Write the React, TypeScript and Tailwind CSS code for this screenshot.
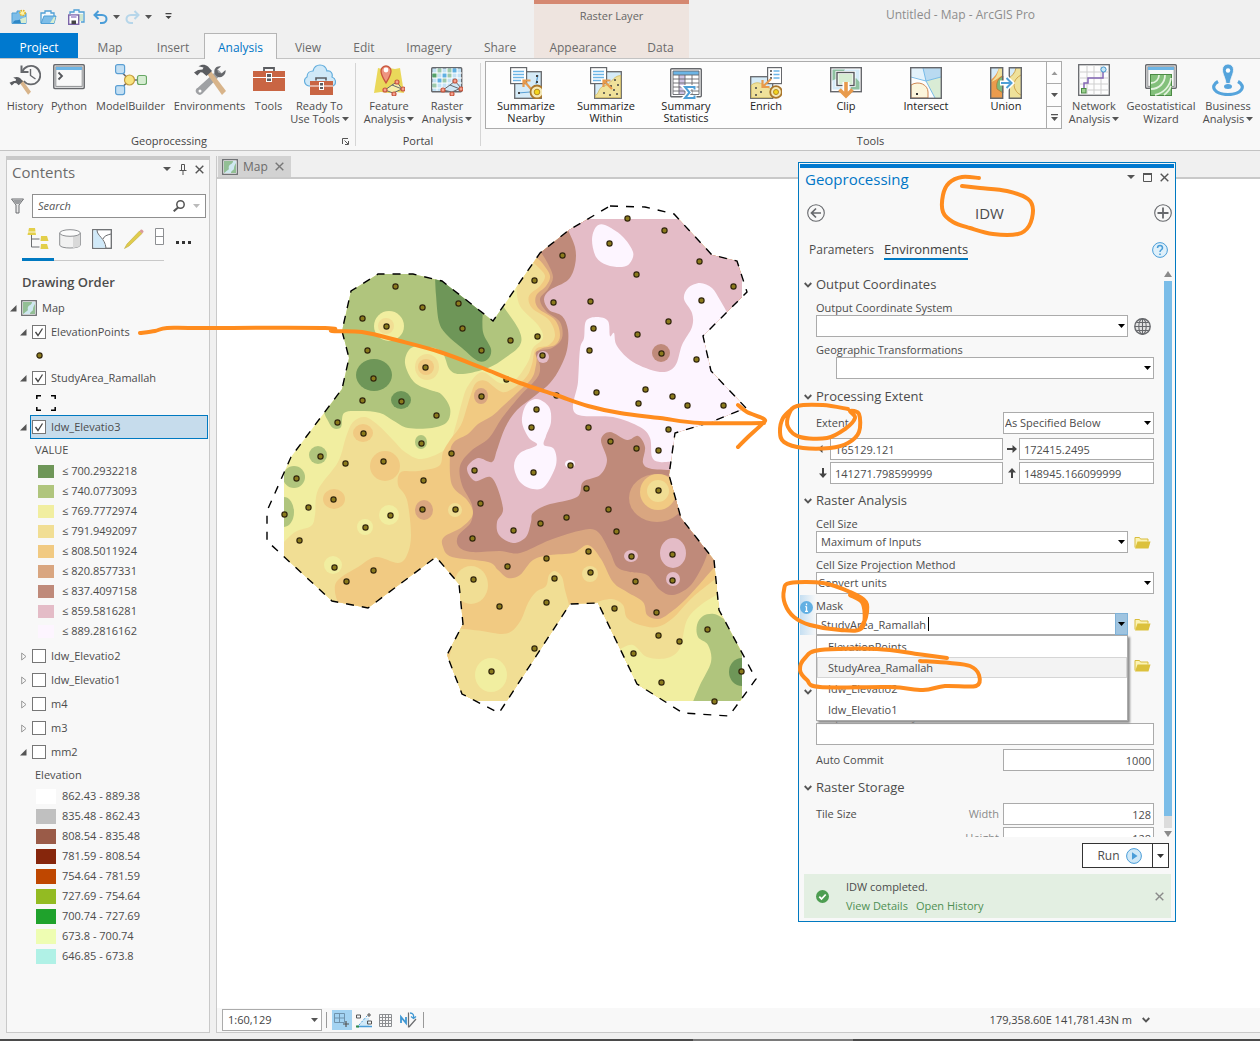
import React, { useState } from 'react';

type Point = [number, number];

const LEVELS = {
  l1: '#6e9658',
  l2: '#b0c57d',
  l3: '#f1eea0',
  l4: '#f1de94',
  l5: '#f1ca82',
  l6: '#d9a680',
  l7: '#bf8a7a',
  l8: '#e4bcc7',
  l9: '#fdf5ff',
};

const idwClasses = [
  { color: LEVELS.l1, label: '≤ 700.2932218' },
  { color: LEVELS.l2, label: '≤ 740.0773093' },
  { color: LEVELS.l3, label: '≤ 769.7772974' },
  { color: LEVELS.l4, label: '≤ 791.9492097' },
  { color: LEVELS.l5, label: '≤ 808.5011924' },
  { color: LEVELS.l6, label: '≤ 820.8577331' },
  { color: LEVELS.l7, label: '≤ 837.4097158' },
  { color: LEVELS.l8, label: '≤ 859.5816281' },
  { color: LEVELS.l9, label: '≤ 889.2816162' },
];

const elevationClasses = [
  { color: '#ffffff', label: '862.43 - 889.38' },
  { color: '#c0c0c0', label: '835.48 - 862.43' },
  { color: '#9a5b48', label: '808.54 - 835.48' },
  { color: '#86260c', label: '781.59 - 808.54' },
  { color: '#bf4700', label: '754.64 - 781.59' },
  { color: '#93bb22', label: '727.69 - 754.64' },
  { color: '#1fa22c', label: '700.74 - 727.69' },
  { color: '#eefdb2', label: '673.8 - 700.74' },
  { color: '#b0f1e6', label: '646.85 - 673.8' },
];

// Catmull-Rom through the given points
const smooth = (pts: Point[], closed = false) => {
  const n = pts.length;
  const at = (i: number) => (closed ? pts[(i + n) % n] : pts[Math.max(0, Math.min(n - 1, i))]);
  let d = `M${pts[0][0]} ${pts[0][1]}`;
  const segments = closed ? n : n - 1;
  for (let i = 0; i < segments; i++) {
    const p0 = at(i - 1);
    const p1 = at(i);
    const p2 = at(i + 1);
    const p3 = at(i + 2);
    d += ` C${p1[0] + (p2[0] - p0[0]) / 6} ${p1[1] + (p2[1] - p0[1]) / 6} ${p2[0] - (p3[0] - p1[0]) / 6} ${p2[1] - (p3[1] - p1[1]) / 6} ${p2[0]} ${p2[1]}`;
  }
  return closed ? d + 'Z' : d;
};

const studyArea: Point[] = [
  [610, 206], [645, 207], [674, 214], [712, 255], [737, 261], [747, 292], [703, 336], [711, 371],
  [746, 408], [711, 422], [675, 433], [669, 475], [681, 518], [714, 560], [719, 610], [756, 679],
  [729, 716], [683, 713], [637, 684], [598, 603], [570, 604], [499, 713], [462, 694], [447, 655],
  [463, 624], [459, 584], [436, 557], [368, 608], [332, 601], [267, 541], [267, 511], [291, 457],
  [342, 389], [349, 358], [342, 331], [351, 291], [378, 274], [413, 274], [442, 281], [493, 321],
  [540, 253], [569, 230],
];

// Each contour is a line through the map that is closed outside the study area
const contours: { color: string; line: Point[]; close: Point[] }[] = [
  {
    color: LEVELS.l4,
    line: [
      [516, 284], [520, 306], [538, 325], [543, 338], [533, 348], [528, 362], [515, 380], [500, 383],
      [482, 372], [468, 386], [462, 402], [455, 428], [447, 448], [422, 459], [405, 452], [393, 440],
      [378, 425], [365, 417], [353, 422], [346, 437], [338, 462], [318, 490], [315, 515], [311, 526],
      [295, 532], [280, 546],
    ],
    close: [[260, 760], [780, 760], [780, 190], [520, 190]],
  },
  {
    color: LEVELS.l5,
    line: [
      [528, 258], [538, 267], [545, 276], [540, 286], [529, 296], [532, 308], [549, 320], [555, 335],
      [549, 345], [536, 349], [532, 364], [527, 376], [515, 387], [502, 392], [486, 381], [476, 383],
      [471, 394], [467, 407], [461, 425], [450, 440], [443, 452], [439, 466], [418, 471], [401, 472],
      [398, 485], [407, 500], [411, 535], [407, 555], [398, 563], [376, 557], [358, 567], [338, 580],
      [335, 592], [340, 608],
    ],
    close: [[340, 760], [780, 760], [780, 190], [520, 190]],
  },
  {
    color: LEVELS.l6,
    line: [
      [533, 254], [543, 264], [550, 276], [546, 286], [536, 296], [538, 308], [555, 320], [560, 335],
      [555, 345], [539, 350], [536, 365], [532, 378], [518, 392], [503, 406], [492, 416], [478, 424],
      [468, 434], [454, 442], [450, 455], [452, 485], [467, 500], [473, 514], [462, 527], [444, 537],
      [443, 547], [452, 557], [488, 562], [498, 570], [508, 578], [520, 575], [533, 560], [550, 555],
      [573, 553], [588, 545], [601, 559], [613, 582], [627, 592], [643, 602], [647, 615], [657, 619],
      [667, 615], [687, 598], [718, 563],
    ],
    close: [[780, 560], [780, 190], [520, 190]],
  },
  {
    color: LEVELS.l7,
    line: [
      [538, 248], [547, 262], [553, 277], [548, 289], [540, 299], [546, 311], [560, 322], [562, 338],
      [552, 348], [536, 352], [540, 366], [537, 378], [520, 396], [502, 418], [489, 438], [471, 451],
      [460, 466], [462, 485], [472, 505], [471, 522], [458, 536], [459, 547], [472, 552], [500, 551],
      [520, 553], [550, 540], [583, 530], [598, 532], [610, 552], [617, 567], [630, 572], [647, 575],
      [660, 590], [673, 595], [690, 586], [703, 565], [709, 548],
    ],
    close: [[780, 548], [780, 190], [530, 190]],
  },
  {
    color: LEVELS.l8,
    line: [
      [566, 226], [575, 247], [575, 265], [568, 280], [550, 290], [544, 299], [549, 310], [562, 316],
      [568, 330], [567, 350], [560, 368], [550, 383], [536, 395], [517, 410], [505, 428], [497, 450],
      [492, 462], [478, 458], [467, 468], [475, 481], [492, 478], [503, 508], [497, 522], [499, 535],
      [513, 543], [526, 537], [531, 522], [533, 513], [547, 505], [577, 497], [583, 482], [600, 475],
      [607, 460], [601, 440], [610, 432], [627, 440], [638, 436], [645, 447], [643, 463], [652, 469],
      [675, 470],
    ],
    close: [[780, 470], [780, 190], [560, 190]],
  },
  {
    color: LEVELS.l9,
    line: [
      [728, 314], [720, 300], [712, 288], [700, 283], [688, 288], [684, 299], [692, 313], [692, 327],
      [682, 345], [675, 366], [660, 372], [633, 362], [617, 346], [614, 333], [610, 336], [608, 321],
      [597, 317], [586, 321], [584, 338], [580, 349], [578, 382], [575, 413], [613, 417], [640, 427],
      [650, 438], [652, 457], [660, 462], [676, 461],
    ],
    close: [[780, 461], [780, 300]],
  },
  {
    color: LEVELS.l4,
    line: [
      [455, 628], [482, 631], [502, 634], [512, 631], [521, 620], [528, 603], [536, 592], [546, 586],
      [549, 575], [555, 571], [562, 577], [565, 590], [570, 608],
    ],
    close: [[570, 760], [430, 760]],
  },
  {
    color: LEVELS.l4,
    line: [
      [596, 602], [612, 599], [623, 605], [627, 618], [640, 625], [657, 627], [673, 618], [693, 597],
      [722, 574],
    ],
    close: [[780, 570], [780, 760], [596, 760]],
  },
  {
    color: LEVELS.l3,
    line: [
      [620, 649], [633, 645], [647, 657], [667, 658], [680, 648], [687, 620], [702, 604], [722, 592],
    ],
    close: [[780, 590], [780, 760], [600, 760]],
  },
  {
    color: LEVELS.l2,
    line: [
      [692, 704], [700, 685], [711, 662], [708, 645], [698, 637], [697, 625], [703, 616], [714, 614],
      [724, 619],
    ],
    close: [[780, 620], [780, 704]],
  },
  {
    color: LEVELS.l2,
    line: [
      [322, 408], [327, 419], [333, 428], [341, 427], [344, 413], [360, 411], [380, 413], [394, 421],
      [408, 428], [432, 428], [447, 422], [450, 408], [441, 394], [430, 390], [414, 382], [405, 363],
      [411, 348], [427, 347], [442, 352], [450, 370], [463, 374], [488, 368], [505, 358], [520, 345],
      [519, 330], [503, 306],
    ],
    close: [[500, 250], [300, 250], [300, 408]],
  },
  {
    color: LEVELS.l1,
    line: [
      [435, 276], [436, 295], [439, 322], [447, 335], [462, 348], [478, 361], [488, 359], [491, 349],
      [483, 332], [483, 308],
    ],
    close: [[483, 270]],
  },
];

const blobs: { color: string; line: Point[] }[] = [
  {
    color: LEVELS.l9,
    line: [[592, 240], [596, 227], [605, 225], [622, 236], [633, 252], [630, 263], [622, 267], [607, 265], [596, 257]],
  },
  {
    color: LEVELS.l9,
    line: [
      [537, 399], [549, 407], [551, 422], [546, 436], [544, 445], [554, 449], [556, 465], [545, 486],
      [533, 489], [520, 482], [514, 466], [520, 453], [537, 445], [529, 438], [522, 422], [526, 405],
    ],
  },
];

// color, cx, cy, rx, ry
const spots: [string, number, number, number, number][] = [
  [LEVELS.l3, 389, 326, 15, 15],
  [LEVELS.l4, 386, 326, 8, 8],
  [LEVELS.l4, 427, 367, 12, 13],
  [LEVELS.l5, 426, 367, 8, 8],
  [LEVELS.l1, 374, 375, 18, 16],
  [LEVELS.l1, 401, 400, 10, 9],
  [LEVELS.l6, 481, 396, 7, 8],
  [LEVELS.l2, 421, 442, 6, 7],
  [LEVELS.l2, 318, 455, 9, 9],
  [LEVELS.l2, 294, 477, 11, 11],
  [LEVELS.l2, 284, 512, 10, 15],
  [LEVELS.l5, 363, 433, 10, 9],
  [LEVELS.l5, 385, 466, 15, 15],
  [LEVELS.l5, 334, 499, 11, 10],
  [LEVELS.l3, 365, 527, 8, 8],
  [LEVELS.l3, 389, 515, 10, 10],
  [LEVELS.l3, 333, 565, 9, 9],
  [LEVELS.l6, 424, 510, 9, 10],
  [LEVELS.l4, 455, 510, 7, 7],
  [LEVELS.l4, 471, 585, 17, 19],
  [LEVELS.l3, 491, 675, 16, 17],
  [LEVELS.l4, 590, 574, 8, 8],
  [LEVELS.l8, 543, 357, 6, 6],
  [LEVELS.l7, 661, 353, 9, 9],
  [LEVELS.l9, 570, 464, 5, 4],
  [LEVELS.l6, 657, 498, 28, 24],
  [LEVELS.l5, 658, 492, 18, 18],
  [LEVELS.l4, 658, 491, 11, 11],
  [LEVELS.l8, 631, 556, 7, 6],
  [LEVELS.l8, 673, 553, 13, 15],
  [LEVELS.l8, 673, 579, 7, 7],
  [LEVELS.l1, 742, 672, 13, 14],
];

const elevationPoints: Point[] = [
  [395, 286], [422, 307], [362, 318], [386, 326], [367, 350], [373, 378], [362, 400], [401, 401],
  [436, 415], [425, 367], [458, 303], [462, 328], [481, 350], [510, 340], [506, 379], [481, 396],
  [337, 422], [363, 433], [320, 456], [345, 463], [383, 461], [421, 443], [451, 453], [627, 218],
  [664, 230], [609, 243], [562, 255], [534, 280], [636, 274], [699, 261], [733, 286], [553, 302],
  [590, 301], [701, 300], [668, 321], [593, 328], [637, 334], [537, 336], [542, 355], [589, 350],
  [661, 353], [696, 359], [556, 395], [596, 392], [645, 389], [672, 396], [638, 403], [687, 405],
  [723, 405], [536, 409], [531, 427], [588, 427], [610, 441], [636, 448], [668, 429], [658, 450],
  [570, 465], [296, 478], [333, 499], [308, 507], [284, 514], [365, 527], [390, 515], [423, 480],
  [422, 509], [455, 509], [474, 470], [480, 503], [472, 538], [299, 540], [334, 567], [373, 570],
  [346, 581], [473, 579], [499, 606], [491, 671], [507, 566], [533, 472], [586, 488], [658, 490],
  [608, 509], [566, 517], [540, 523], [513, 530], [616, 531], [546, 558], [588, 551], [631, 556],
  [672, 554], [590, 572], [554, 578], [635, 581], [672, 580], [546, 602], [614, 608], [656, 612],
  [534, 648], [658, 635], [679, 641], [707, 629], [633, 653], [661, 682], [741, 671], [714, 701],
];

const inkStrokes: Point[][] = [
  [
    [140, 333], [155, 331], [167, 328], [200, 328], [325, 328], [332, 331], [362, 332], [400, 341], [440, 352],
    [480, 367], [520, 383], [556, 395], [588, 406], [620, 413], [660, 418], [700, 423], [764, 423],
  ],
  [[738, 405], [747, 412], [764, 419], [762, 424], [748, 437], [738, 447]],
  [
    [979, 178], [962, 177], [949, 183], [943, 195], [943, 212], [953, 222], [970, 228], [993, 234],
    [1018, 234], [1029, 226], [1033, 210], [1028, 199], [1007, 191], [980, 188], [962, 186],
  ],
  [
    [848, 409], [823, 405], [797, 406], [789, 414], [788, 427], [800, 437], [827, 438], [845, 429],
    [855, 418], [850, 411], [859, 414], [859, 432], [848, 443], [830, 448], [803, 448], [784, 442],
    [780, 432], [783, 418], [793, 408],
  ],
  [
    [850, 595], [863, 604], [862, 628], [840, 630], [810, 625], [794, 617], [785, 604], [784, 590],
    [790, 583], [823, 583], [850, 592], [866, 602], [866, 617], [860, 629],
  ],
  [
    [947, 658], [917, 654], [877, 649], [820, 650], [805, 658], [800, 670], [807, 680], [820, 687],
    [890, 687], [923, 690], [945, 686], [976, 686], [979, 675], [970, 666], [950, 663], [920, 661],
  ],
];

const MapCanvas = () => (
  <svg
    className="absolute left-0 top-0"
    width="563"
    height="560"
    viewBox="217 179 563 560"
    role="img"
    aria-label="IDW surface with elevation points"
  >
    <defs>
      <clipPath id="study-area">
        <polygon points={studyArea.map((p) => p.join(',')).join(' ')} />
      </clipPath>
      <clipPath id="raster-extent">
        <rect x="284" y="219" width="458" height="482" />
      </clipPath>
    </defs>
    <g clipPath="url(#raster-extent)">
      <g clipPath="url(#study-area)">
        <rect x="217" y="179" width="563" height="560" fill={LEVELS.l3} />
        {contours.map((c, i) => (
          <path key={i} fill={c.color} d={`${smooth(c.line)} ${c.close.map((p) => `L${p[0]} ${p[1]}`).join(' ')}Z`} />
        ))}
        {blobs.map((b, i) => (
          <path key={i} fill={b.color} d={smooth(b.line, true)} />
        ))}
        {spots.map(([color, cx, cy, rx, ry], i) => (
          <ellipse key={i} cx={cx} cy={cy} rx={rx} ry={ry} fill={color} />
        ))}
      </g>
    </g>
    <polygon
      points={studyArea.map((p) => p.join(',')).join(' ')}
      fill="none"
      stroke="#000"
      strokeWidth="1.4"
      strokeDasharray="8 8"
    />
    {elevationPoints.map(([x, y]) => (
      <circle key={`${x}-${y}`} cx={x + 0.5} cy={y + 0.5} r="2.6" fill="#8a7a1c" stroke="#33270d" strokeWidth="1.2" />
    ))}
  </svg>
);

const Ink = () => (
  <svg
    className="pointer-events-none absolute left-0 top-0 z-30"
    width="1260"
    height="1041"
    viewBox="0 0 1260 1041"
    fill="none"
    stroke="#ff8c1e"
    strokeWidth="4"
    strokeLinecap="round"
    strokeLinejoin="round"
    aria-hidden="true"
  >
    {inkStrokes.map((s, i) => (
      <path key={i} d={smooth(s)} />
    ))}
  </svg>
);

/* ---------- small glyphs ---------- */

const Caret = ({ className = 'text-[#555]' }: { className?: string }) => (
  <svg className={className} width="7" height="4" viewBox="0 0 7 4" fill="currentColor" aria-hidden="true">
    <path d="M0 0h7L3.5 4z" />
  </svg>
);

const PaneCaret = () => (
  <svg className="text-[#555]" width="8" height="4" viewBox="0 0 8 4" fill="currentColor" aria-hidden="true">
    <path d="M0 0h8L4 4z" />
  </svg>
);

const CloseGlyph = ({ color = '#555' }: { color?: string }) => (
  <svg width="9" height="9" viewBox="0 0 9 9" stroke={color} strokeWidth="1.4" aria-hidden="true">
    <path d="M0.7 0.7l7.6 7.6M8.3 0.7L0.7 8.3" />
  </svg>
);

const Chevron = () => (
  <svg width="8" height="6" viewBox="0 0 8 6" fill="none" stroke="#555" strokeWidth="1.8" aria-hidden="true">
    <path d="M0.7 1l3.3 3.4L7.3 1" />
  </svg>
);

const Folder = () => (
  <svg width="17" height="13" viewBox="0 0 17 13" aria-hidden="true">
    <path d="M1 11.5V1.5h4.5l1 1.5H14v2.5" fill="#fbf3b4" stroke="#d9bd3c" />
    <path d="M1 12.5L3.500 5.500H16.500L14.500 12.500z" fill="#dcc13c" />
  </svg>
);

/* ---------- ribbon icons ---------- */

const HammerShape = () => (
  <>
    <path d="M10.5 18.5l2.8-2.4L22 27.8l-2.9 2.9z" fill="#d8b48a" />
    <path d="M0.5 18.8l2.2 2.7 2.8-2.6 2 .3 2.2 2 4.3-4-3-3.2c-2-1.4-4.2-1.2-6.8-.4l2.8 1.6-.4 1.8-2 .1z" fill="#5b5d61" />
  </>
);

const icons: Record<string, React.ReactNode> = {
  history: (
    <>
      <path d="M13.200 8a9.300 9.300 0 1 1 1.500 9" fill="none" stroke="#66686c" strokeWidth="1.8" />
      <path d="M12.500 1.500v6.500h7" fill="none" stroke="#66686c" strokeWidth="2" />
      <path d="M21.500 5v6.500l5 3.500" fill="none" stroke="#66686c" strokeWidth="1.4" />
      <HammerShape />
    </>
  ),
  python: (
    <>
      <rect x="0.8" y="0.8" width="30.4" height="23.6" rx="1" fill="#fff" stroke="#66686c" strokeWidth="1.5" />
      <rect x="2.8" y="2.8" width="26.4" height="19.6" fill="#f9f9f9" stroke="#8d8f92" />
      <path d="M3 3h26v3H3z" fill="#6cb5e6" />
      <path d="M5.5 8.5l3.5 3.5-3.5 3.5" fill="none" stroke="#55575b" strokeWidth="1.8" />
    </>
  ),
  model: (
    <>
      <path d="M5 6l9 10L5 26M14 16h12" fill="none" stroke="#66686c" strokeWidth="1.5" />
      <rect x="0.6" y="0.6" width="9" height="9" rx="2" fill="#c3dff3" stroke="#5b9fd3" strokeWidth="1.2" />
      <rect x="0.6" y="21.6" width="9" height="9" rx="2" fill="#c3dff3" stroke="#5b9fd3" strokeWidth="1.2" />
      <circle cx="14.5" cy="16" r="5" fill="#f8e47f" stroke="#c49b3e" strokeWidth="1.2" />
      <rect x="22.5" y="11.5" width="9" height="9" rx="2" fill="#d6edd2" stroke="#67a765" strokeWidth="1.2" />
    </>
  ),
  environments: (
    <>
      <path d="M3.5 24L24 5.500l4 4L8.500 29.500a3.800 3.800 0 0 1-5.500-5.500z" fill="#9fa1a4" />
      <circle cx="6" cy="27" r="1.5" fill="#fff" />
      <path d="M31.500 6l-4 3.500-3.500-1-.6-3L27 2.500c-4-1-7.500 2-6.500 6.500 1 4 5.500 5.500 8.500 3 2-1.500 3-4 2.500-6z" fill="#66686c" />
      <path d="M13.500 10.500l3.500-3.200L32 27l-4 4z" fill="#d8b48a" />
      <path d="M0 8.500l3.300 3 3.200-3.300 2 .2 4 3.600L18 7l-4-4.500C11 0 7.500.2 4.500 2.200l5 1.300-1 2-4.500.5z" fill="#5b5d61" />
    </>
  ),
  tools: (
    <>
      <path d="M11 7V4h10v3" fill="none" stroke="#5b5d61" strokeWidth="1.8" />
      <rect x="0" y="7" width="32" height="20" fill="#c96543" />
      <path d="M0 13.500h32" stroke="#fff" />
      <rect x="13" y="9" width="6" height="9" fill="#fff" />
      <path d="M14 10h4v3h-4zM14 14.500h4v2.500h-4z" fill="#5b5d61" />
    </>
  ),
  ready: (
    <>
      <path d="M5 22c-5-1-6-7-2-9 0-4 3-6 6-6 2-8 12-8 14 0 4-1 6 3 5 6 5 2 4 8 1 9z" fill="#d0e9f8" stroke="#63aedd" strokeWidth="1.2" />
      <path d="M12 16.500v-2.500h10v2.500" fill="none" stroke="#5b5d61" strokeWidth="1.6" />
      <rect x="6" y="17" width="23" height="14" fill="#c96543" />
      <path d="M6 22h23" stroke="#fff" />
      <rect x="15" y="18" width="5" height="8" fill="#fff" />
      <path d="M16 19h3v2.500h-3zM16 23h3v2h-3z" fill="#5b5d61" />
    </>
  ),
  feature: (
    <>
      <path d="M5 4l4 1 7-1 6 1 5-1 4 25-8-1-7 1-8-1-7 1z" fill="#ead85a" />
      <path d="M13 19c-3-5-5-8-5-12a5 5 0 0 1 10 0c0 4-2 7-5 12z" fill="#ee9480" stroke="#c9573e" strokeWidth="1.3" />
      <circle cx="13" cy="6" r="2.4" fill="#fff" />
      <path d="M12 26l7-5 5-3 5 7-9 4zM19 21l10 4" fill="#f6efab" stroke="#66686c" />
      {[[12, 26], [24, 18], [30, 25], [21, 30]].map(([x, y]) => (
        <circle key={x} cx={x} cy={y} r="2" fill="#f4a08d" stroke="#c9573e" strokeWidth="1.2" />
      ))}
    </>
  ),
  raster: (
    <>
      <rect x="0.7" y="3.7" width="30" height="24" rx="1" fill="#c3e2f5" stroke="#66686c" strokeWidth="1.4" />
      <path d="M6 4.400h5v5H6zM16 4.400h5V9h-5zM16 9h5v5h-5zM11 14h5v5h-5zM1.400 19H6v5H1.400z" fill="#9cc9ab" />
      <path d="M1.400 9h5v5h-5z" fill="#55a36a" />
      <path d="M21 4.400h5V9h-5zM6 14h5v5H6zM21 14h5v5h-5zM11 9h5v5h-5z" fill="#5fb0e2" />
      <path d="M6 4v23M11 4v23M16 4v23M21 4v23M26 4v23M1 9h30M1 14h30M1 19h30M1 24h30" stroke="#fff" />
      <path d="M12 26l7-5 5-4 6 7-9 4zM19 21l10 4" fill="#cfe7f6" stroke="#66686c" />
      {[[12, 26], [24, 17], [30, 25], [21, 30]].map(([x, y]) => (
        <circle key={x} cx={x} cy={y} r="2" fill="#f4a08d" stroke="#c9573e" strokeWidth="1.2" />
      ))}
    </>
  ),
  nearby: (
    <>
      <rect x="4.7" y="4.7" width="26.6" height="26.6" fill="#d5ebf8" stroke="#66686c" strokeWidth="1.3" />
      <path d="M28 8l-2 9M8 26l12-1" stroke="#5b9fd3" strokeWidth="1.2" />
      <path d="M26 9h2M26 15h2M8 26h2" stroke="#444" strokeWidth="2" />
      <rect x="0.6" y="0.6" width="16" height="16" fill="#fff" stroke="#66686c" strokeWidth="1.2" />
      <path d="M3 4.500h11M3 7.500h11M3 10.500h11M3 13.500h8" stroke="#6cb5e6" strokeWidth="1.4" />
      <path d="M21 22l-7-8M13.500 20v-6.500h7" fill="none" stroke="#e89a4b" strokeWidth="2.2" />
      <circle cx="27" cy="25" r="6.5" fill="#f4e9b8" stroke="#a9762c" strokeWidth="1.8" />
      <circle cx="27" cy="25" r="2.8" fill="#f3d61c" stroke="#b58a1e" />
    </>
  ),
  within: (
    <>
      <rect x="4.7" y="4.7" width="26.6" height="26.6" fill="#d5ebf8" stroke="#66686c" strokeWidth="1.3" />
      <path d="M5.400 30.600V28c3 0 3-7 8-9 8-1 9-10 17.200-10.500v22z" fill="#efe19a" stroke="#d3b95a" strokeWidth="0.8" />
      <path d="M13 26h2M19 28h2M23 23h2M27 18h2M26 27h2M20 19h2M24 13h2" stroke="#444" strokeWidth="1.6" />
      <rect x="0.6" y="0.6" width="16" height="16" fill="#fff" stroke="#66686c" strokeWidth="1.2" />
      <path d="M3 4.500h11M3 7.500h11M3 10.500h11M3 13.500h8" stroke="#6cb5e6" strokeWidth="1.4" />
      <path d="M22 22l-8-8M13.500 20v-6.500h7" fill="none" stroke="#e89a4b" strokeWidth="2.2" />
    </>
  ),
  statistics: (
    <>
      <rect x="0.7" y="1.7" width="30.6" height="28" rx="1" fill="#fff" stroke="#66686c" strokeWidth="1.4" />
      <path d="M3 4h26v4H3z" fill="#6cb5e6" />
      <path d="M9 8h6v19H9z" fill="#cfc3e4" />
      <path d="M3 4h26v23.500H3zM3 8h26M3 12h26M3 16h26M3 20h26M3 24h26M9 8v19M15 8v19M22 8v19" fill="none" stroke="#66686c" strokeWidth="0.9" />
      <path d="M24.500 22.500v-2.500H14l5.500 5.500L14 31h10.500v-2.500" fill="none" stroke="#fff" strokeWidth="4" />
      <path d="M24.500 22.500v-2.500H15l4.500 5.500L15 31h9.500v-2.500" fill="none" stroke="#4e9fd6" strokeWidth="2" />
    </>
  ),
  enrich: (
    <>
      <rect x="0.7" y="9.7" width="22" height="21.6" fill="#d5ebf8" stroke="#66686c" strokeWidth="1.3" />
      <path d="M1.400 18c5-4 10-2 14 1 3 2 6 3 6.700 3v8.600H1.400z" fill="#efe19a" stroke="#d3b95a" strokeWidth="0.8" />
      <path d="M5 21h2M10 25h2M5 28h2M12 19h2" stroke="#444" strokeWidth="1.6" />
      <rect x="17.600" y="0.600" width="14" height="16" fill="#fff" stroke="#66686c" strokeWidth="1.2" />
      <path d="M20 4h2M20 7.500h2M20 11h2" stroke="#444" strokeWidth="1.6" />
      <path d="M23.500 4h6M23.500 7.500h6M23.500 11h6" stroke="#6cb5e6" strokeWidth="1.3" />
      <path d="M21 12l-8 7.500M12.500 13v7h7" fill="none" stroke="#e89a4b" strokeWidth="2.2" />
      <circle cx="26" cy="25" r="5.8" fill="#f4e9b8" stroke="#a9762c" strokeWidth="1.8" />
      <circle cx="26" cy="25" r="2.5" fill="#f3d61c" stroke="#b58a1e" />
    </>
  ),
  clip: (
    <>
      <rect x="0.7" y="0.7" width="30.6" height="24" fill="#fff" stroke="#66686c" strokeWidth="1.4" />
      <path d="M2.500 2.500h27v20h-27z" fill="#d5ebf8" />
      <path d="M2.500 2.500H15l-6 8-6.500 3zM22 14l4-3 3.500 4v7.500h-9z" fill="#8fc1a0" />
      <rect x="7" y="5.500" width="17" height="13" fill="#d6edd2" stroke="#fff" strokeWidth="3" />
      <rect x="7" y="5.500" width="17" height="13" fill="none" stroke="#55575b" strokeWidth="1.4" />
      <path d="M16 15v14" stroke="#fff" strokeWidth="7" />
      <path d="M16 15v13M9.500 22.500L16 29l6.500-6.500" fill="none" stroke="#e89a4b" strokeWidth="3.6" />
    </>
  ),
  intersect: (
    <>
      <rect x="0.7" y="0.7" width="30.6" height="30.6" fill="#fdfdfd" />
      <path d="M1 1h13l3 13L1 9z" fill="#e3f2fb" />
      <path d="M13 1h18v9l-15 4z" fill="#b9daf1" />
      <path d="M16 14l15-4v21h-6z" fill="#d9ecd5" />
      <path d="M1 10l15 4 15-4M13 1l3 13 9 17" fill="none" stroke="#6cb5e6" strokeWidth="0.9" />
      <path d="M1 18c8-5 17 0 17 7v6H1z" fill="#fbf5dc" stroke="#c9783f" strokeWidth="0.9" />
      <path d="M6 27h2" stroke="#333" strokeWidth="2" />
      <rect x="0.7" y="0.7" width="30.6" height="30.6" fill="none" stroke="#66686c" strokeWidth="1.4" />
    </>
  ),
  union: (
    <>
      <path d="M1 1h12v30H1z" fill="#eb9b4d" />
      <path d="M1 1h8c-2 6-5 9-8 12z" fill="#d5ebf8" />
      <path d="M9 1h4v7c-4 2-8 6-12 7 5-4 7-9 8-14z" fill="#efe19a" />
      <path d="M13 9c-6 3-7 8-6 13l6 4z" fill="#7fba7c" stroke="#a9762c" strokeWidth="0.7" />
      <path d="M19 1h12v30H19z" fill="#efe19a" />
      <path d="M19 1h7c-1 5-4 8-7 10z" fill="#d5ebf8" />
      <path d="M31 8c-7 4-8 9-6 14 2 4 4 5 6 6M26 1c-1 5-4 8-7 10" fill="none" stroke="#c99a3e" strokeWidth="0.9" />
      <path d="M0.700 0.700h12v30.600h-12zM19.300 0.700h12v30.600h-12z" fill="none" stroke="#66686c" strokeWidth="1.4" />
      <path d="M10 16h10M16 10.500l5.500 5.500-5.500 5.500" fill="none" stroke="#fff" strokeWidth="5" />
      <path d="M11 16h10M16.500 11l5 5-5 5" fill="none" stroke="#4e9fd6" strokeWidth="2" />
    </>
  ),
  network: (
    <>
      <rect x="0.7" y="0.7" width="30.6" height="30.6" fill="#fdfdfd" stroke="#66686c" strokeWidth="1.3" />
      <path d="M9 1v30M16 1v30M23 1v30M1 8h30M1 14h30M1 20h30M10 26h21" stroke="#cfcfcf" />
      <path d="M6 25v-6h4v-5h15V7" fill="none" stroke="#8467b5" strokeWidth="1.5" />
      <circle cx="25.5" cy="5.5" r="2.6" fill="#c3e6f7" stroke="#3f91c9" />
      <rect x="3.5" y="24.5" width="4.5" height="4.5" fill="#9bd08e" stroke="#4b8a45" />
    </>
  ),
  geostat: (
    <>
      <rect x="0.7" y="0.7" width="30.6" height="23.6" rx="1" fill="#fff" stroke="#66686c" strokeWidth="1.4" />
      <rect x="2.8" y="2.8" width="26.4" height="19.6" fill="#f9f9f9" stroke="#8d8f92" />
      <path d="M3 3h26v3H3z" fill="#6cb5e6" />
      <rect x="5.5" y="10.5" width="21" height="21" fill="#83c07b" stroke="#4b8a45" />
      <path d="M6 19c5 0 8-4 8-8M6 25c8 0 14-6 14-14M10 31c9-2 15-9 16-17M19 31c4-3 6-6 7-9" fill="none" stroke="#e4f3df" strokeWidth="1.8" />
    </>
  ),
  business: (
    <>
      <path d="M6 17.500c-9 5-3 13 10 13s19-8 10-13" fill="none" stroke="#55a4dc" strokeWidth="3.2" />
      <ellipse cx="16" cy="22.5" rx="4" ry="2.5" fill="#55a4dc" />
      <path d="M10.500 5.500a5.500 5.500 0 0 1 11 0c0 5-2.500 7-3.500 14h-4c-1-7-3.500-9-3.500-14z" fill="#55a4dc" stroke="#f8f8f8" strokeWidth="0.8" />
      <circle cx="16" cy="6.5" r="2.2" fill="#fff" />
    </>
  ),
};

interface RibbonButtonProps {
  icon: string;
  lines: string[];
  width: string;
  menu?: boolean;
  gallery?: boolean;
}

const RibbonButton: React.FC<RibbonButtonProps> = ({ icon, lines, width, menu, gallery }) => (
  <button className={`flex shrink-0 flex-col items-center pt-[5px] ${width} ${gallery ? 'text-[#222]' : 'text-[#4c4c4c]'}`}>
    <svg width="32" height="32" viewBox="0 0 32 32" aria-hidden="true">
      {icons[icon]}
    </svg>
    <span className={`flex flex-col items-center whitespace-nowrap text-[11px] ${gallery ? 'mt-px leading-[12px]' : 'mt-[3px] leading-[13px]'}`}>
      {lines.map((line, i) => (
        <span key={line} className="flex items-center gap-[2px]">
          {line}
          {menu && i === lines.length - 1 && <Caret />}
        </span>
      ))}
    </span>
  </button>
);

const QuickAccess = () => (
  <div className="flex h-[33px] items-center pl-[11px]">
    <button aria-label="New project" className="mr-3">
      <svg width="17" height="16" viewBox="0 0 17 16">
        <path d="M1 4h5V2h5v2h4v10.500H1z" fill="#7dbde8" stroke="#4f9fd5" />
        <path d="M2 14c1-5 7-1 8-5l4 5z" fill="#2f87c5" />
        <path d="M9 10l6-2v6h-5z" fill="#d8edd0" />
        <circle cx="11.5" cy="4" r="2.6" fill="#fdf3a6" stroke="#e6b422" strokeWidth="1.5" strokeDasharray="1.5 1" />
      </svg>
    </button>
    <button aria-label="Open project" className="mr-[11px]">
      <svg width="17" height="16" viewBox="0 0 17 16">
        <path d="M1 14V4h4V2h6v2h3v3" fill="#f4f9fd" stroke="#4f9fd5" strokeWidth="1.3" />
        <path d="M1 14.500L4 7h12l-2 7.500z" fill="#7dbde8" stroke="#4f9fd5" />
        <path d="M10 14l4-6h1.500L14 14z" fill="#d8edd0" />
      </svg>
    </button>
    <button aria-label="Save project" className="mr-2">
      <svg width="17" height="16" viewBox="0 0 17 16">
        <path d="M2 5V3h4V1h5v2h5v10h-3" fill="#f4f9fd" stroke="#4f9fd5" strokeWidth="1.3" />
        <path d="M10 5h5v7h-5z" fill="#cfe6cf" />
        <rect x="0.7" y="6" width="10" height="9.3" fill="#fff" stroke="#7b64a8" strokeWidth="1.4" />
        <path d="M3 6h5.500v3H3z" fill="#b9a8d8" />
        <path d="M3.500 11.500h4.500V15H3.500z" fill="#444" />
      </svg>
    </button>
    <button aria-label="Undo" className="flex items-center gap-[5px]">
      <svg width="15" height="14" viewBox="0 0 15 14" fill="none" stroke="#4a9dd8" strokeWidth="2">
        <path d="M5.500 1L1.500 5l4 4M2 5h7c6 0 6 8 0 8H7" />
      </svg>
      <Caret />
    </button>
    <button aria-label="Redo" className="ml-[5px] flex items-center gap-[5px]">
      <svg width="15" height="14" viewBox="0 0 15 14" fill="none" stroke="#b6d6ea" strokeWidth="2">
        <path d="M9.500 1l4 4-4 4M13 5H6C0 5 0 13 6 13h2" />
      </svg>
      <Caret />
    </button>
    <button aria-label="Customize toolbar" className="ml-[13px]">
      <svg width="7" height="7" viewBox="0 0 7 7" fill="#444">
        <path d="M0.500 0h6v1.200h-6zM0.500 3h6L3.500 6z" />
      </svg>
    </button>
  </div>
);

const Tab = ({ label, width }: { label: string; width: string }) => (
  <button className={`h-[25px] shrink-0 pt-1 text-center text-[#6b6b6b] ${width}`}>{label}</button>
);

const TopBar = () => (
  <div className="flex shrink-0 text-xs">
    <div className="flex w-[534px] shrink-0 flex-col">
      <QuickAccess />
      <nav className="flex border-b border-[#c3c3c3]">
        <button className="h-[25px] w-[78px] bg-[#0079cf] pt-1 text-white">Project</button>
        <Tab label="Map" width="w-16" />
        <Tab label="Insert" width="w-[62px]" />
        <button className="-mb-px h-[26px] w-[73px] border border-b-0 border-[#b5b5b5] bg-[#f8f8f8] pt-[3px] text-center font-medium text-[#0076c6]">
          Analysis
        </button>
        <Tab label="View" width="w-[62px]" />
        <Tab label="Edit" width="w-[50px]" />
        <Tab label="Imagery" width="w-20" />
        <Tab label="Share" width="w-[62px]" />
      </nav>
    </div>
    <div className="flex w-[155px] shrink-0 flex-col border-b border-[#c3c3c3] bg-[#eee4df]">
      <div className="h-1 bg-[#d58871]" />
      <div className="flex h-[29px] items-center justify-center pb-1 text-[11px] text-[#666]">Raster Layer</div>
      <div className="flex">
        <Tab label="Appearance" width="w-[98px]" />
        <Tab label="Data" width="w-[57px]" />
      </div>
    </div>
    <div className="flex flex-1 justify-center border-b border-[#c3c3c3] pr-7 leading-[30px] text-[#8d8d8d]">
      Untitled - Map - ArcGIS Pro
    </div>
  </div>
);

const GroupLabel = ({ children }: { children: React.ReactNode }) => (
  <div className="flex h-4 items-center justify-center text-[11px] text-[#444]">{children}</div>
);

const Ribbon = () => (
  <div className="flex h-[92px] shrink-0 border-b border-[#c3c3c3] bg-[#f8f8f8]">
    <div className="relative flex w-[355px] shrink-0 flex-col justify-between pb-px">
      <div className="flex pl-[3px]">
        <RibbonButton icon="history" lines={['History']} width="w-11" />
        <RibbonButton icon="python" lines={['Python']} width="w-11" />
        <RibbonButton icon="model" lines={['ModelBuilder']} width="w-[79px]" />
        <RibbonButton icon="environments" lines={['Environments']} width="w-[79px]" />
        <RibbonButton icon="tools" lines={['Tools']} width="w-[39px]" />
        <RibbonButton icon="ready" lines={['Ready To', 'Use Tools']} width="w-[63px]" menu />
      </div>
      <GroupLabel>
        <span className="pr-[17px]">Geoprocessing</span>
      </GroupLabel>
      <button aria-label="Geoprocessing options" className="absolute bottom-[5px] right-[6px]">
        <svg width="7" height="7" viewBox="0 0 7 7" fill="none" stroke="#555">
          <path d="M0.500 6V0.500H6M2.500 2.500l3.500 3.500M6.500 3v3.500H3" />
        </svg>
      </button>
    </div>
    <div className="my-1 w-px bg-[#d5d5d5]" />
    <div className="flex w-[124px] shrink-0 flex-col justify-between pb-px">
      <div className="flex pl-1">
        <RibbonButton icon="feature" lines={['Feature', 'Analysis']} width="w-[58px]" menu />
        <RibbonButton icon="raster" lines={['Raster', 'Analysis']} width="w-[58px]" menu />
      </div>
      <GroupLabel>Portal</GroupLabel>
    </div>
    <div className="my-1 w-px bg-[#d5d5d5]" />
    <div className="flex flex-1 flex-col justify-between pb-px">
      <div className="flex pl-1">
        <div className="mt-[2px] flex h-[68px] shrink-0 border border-[#ababab] bg-[#fdfdfd]">
          <RibbonButton gallery icon="nearby" lines={['Summarize', 'Nearby']} width="w-20" />
          <RibbonButton gallery icon="within" lines={['Summarize', 'Within']} width="w-20" />
          <RibbonButton gallery icon="statistics" lines={['Summary', 'Statistics']} width="w-20" />
          <RibbonButton gallery icon="enrich" lines={['Enrich']} width="w-20" />
          <RibbonButton gallery icon="clip" lines={['Clip']} width="w-20" />
          <RibbonButton gallery icon="intersect" lines={['Intersect']} width="w-20" />
          <RibbonButton gallery icon="union" lines={['Union']} width="w-20" />
          <div className="flex w-[15px] flex-col divide-y divide-[#ababab] border-l border-[#ababab]">
            <button aria-label="Scroll up" className="flex flex-1 items-center justify-center">
              <svg width="7" height="4" viewBox="0 0 7 4" fill="#999">
                <path d="M0.500 4h6L3.500 0.500z" />
              </svg>
            </button>
            <button aria-label="Scroll down" className="flex flex-1 items-center justify-center">
              <Caret />
            </button>
            <button aria-label="More tools" className="flex flex-1 items-center justify-center">
              <svg width="7" height="7" viewBox="0 0 7 7" fill="#555">
                <path d="M0 0h7v1.200H0zM0 3h7L3.500 7z" />
              </svg>
            </button>
          </div>
        </div>
        <div className="flex gap-[2px] pl-[2px]">
          <RibbonButton icon="network" lines={['Network', 'Analysis']} width="w-[60px]" menu />
          <RibbonButton icon="geostat" lines={['Geostatistical', 'Wizard']} width="w-[70px]" />
          <RibbonButton icon="business" lines={['Business', 'Analysis']} width="w-[60px]" menu />
        </div>
      </div>
      <GroupLabel>Tools</GroupLabel>
    </div>
  </div>
);

/* ---------- contents pane ---------- */

const Expander = ({ open }: { open: boolean }) =>
  open ? (
    <svg width="7" height="7" viewBox="0 0 7 7" fill="#555" aria-hidden="true">
      <path d="M6.500 0v6.500H0z" />
    </svg>
  ) : (
    <svg width="6" height="9" viewBox="0 0 6 9" fill="none" stroke="#999" aria-hidden="true">
      <path d="M0.700 1v7L5 4.500z" />
    </svg>
  );

const MapGlyph = () => (
  <svg width="16" height="16" viewBox="0 0 16 16" aria-hidden="true">
    <rect x="0.7" y="0.7" width="14.6" height="14.6" fill="#fff" stroke="#6b6d70" strokeWidth="1.3" />
    <path d="M2 2h12v12H2z" fill="#cfe8f0" />
    <path d="M2 2h9c0 3-3 3-4 5s1 3-1 4-2 2-4 3zM14 4v10h-5c0-3 3-2 3-5 0-2 1-3 2-5z" fill="#93bf95" />
  </svg>
);

interface LayerRowProps {
  name: string;
  checked?: boolean;
  open?: boolean;
  selected?: boolean;
}

const LayerRow: React.FC<LayerRowProps> = ({ name, checked = false, open = false, selected = false }) => {
  const [visible, setVisible] = useState(checked);
  const id = `layer-${name}`;

  return (
    <div className="flex h-6 items-stretch">
      <button aria-label={`Expand ${name}`} className="flex w-[23px] items-center justify-end pr-[3px]">
        <Expander open={open} />
      </button>
      <div
        className={`mr-px flex flex-1 items-center gap-[5px] border pl-px ${
          selected ? 'border-[#0079c1] bg-[#c6dcec]' : 'border-transparent'
        }`}
      >
        <span className="relative h-[14px] w-[14px]">
          <input
            id={id}
            type="checkbox"
            checked={visible}
            onChange={() => setVisible(!visible)}
            className="peer block h-[14px] w-[14px] appearance-none border border-[#767676] bg-white"
          />
          <svg
            className="pointer-events-none absolute left-0 top-0 hidden peer-checked:block"
            width="14"
            height="14"
            viewBox="0 0 14 14"
            fill="none"
            stroke="#444"
            strokeWidth="1.3"
          >
            <path d="M3.500 7l2.500 3.500L10.500 3.500" />
          </svg>
        </span>
        <label htmlFor={id}>{name}</label>
      </div>
    </div>
  );
};

const Contents = () => (
  <aside className="flex w-[204px] shrink-0 flex-col border border-[#c9c9c9] bg-[#f8f8f8] text-[11px] text-[#4c4c4c]">
    <div className="h-[3px] bg-[#c9c9c9]" />
    <div className="flex h-6 items-center justify-between pl-[5px] pr-[5px]">
      <h2 className="text-[15px] text-[#6b6b6b]">Contents</h2>
      <div className="flex items-center gap-2 pb-[6px]">
        <button aria-label="Pane menu">
          <PaneCaret />
        </button>
        <button aria-label="Auto hide">
          <svg width="8" height="11" viewBox="0 0 8 11" fill="none" stroke="#555">
            <path d="M2.500 0.500h3v6h-3zM0.500 6.500h7M4 7v4" />
          </svg>
        </button>
        <button aria-label="Close pane">
          <CloseGlyph />
        </button>
      </div>
    </div>
    <div className="mt-[10px] flex items-center pl-1">
      <svg width="13" height="16" viewBox="0 0 13 16" aria-hidden="true">
        <path d="M0.500 1h12L8 7v8H5V7z" fill="#e8e8e8" stroke="#6b6d70" />
        <path d="M2 2h9L8 6H5z" fill="#9a9c9f" />
      </svg>
      <div className="ml-2 mr-[3px] flex h-6 flex-1 items-center border border-[#8f8f8f] bg-white pr-[5px]">
        <input
          aria-label="Search"
          placeholder="Search"
          className="w-full min-w-0 flex-1 pl-[5px] italic outline-none placeholder:text-[#555]"
        />
        <svg width="12" height="12" viewBox="0 0 12 12" fill="none" stroke="#555" aria-hidden="true">
          <circle cx="7.5" cy="4.5" r="3.7" strokeWidth="1.5" />
          <path d="M5 7.500L0.700 11.300" strokeWidth="2" />
        </svg>
        <span className="ml-2">
          <Caret className="text-[#bbb]" />
        </span>
      </div>
    </div>
    <div className="ml-[15px] mt-[9px] flex items-start">
      <div className="flex h-[34px] w-[142px] items-start border-b border-[#c9c9c9]">
        <button aria-label="List by drawing order" className="flex h-[34px] w-8 justify-center border-b-[3px] border-[#0079c1]">
          <svg width="22" height="23" viewBox="0 0 22 23">
            <path d="M4.500 8v12h8M4.500 12h8" fill="none" stroke="#6b6d70" />
            <path d="M2 1h6l1 7H0.500zM14 9h6l1.500 5h-8zM14 17h6l1.500 5h-8z" fill="#e3cf4a" />
            <path d="M0.500 5h8.500" stroke="#fff" strokeWidth="0.8" />
          </svg>
        </button>
        <button aria-label="List by data source" className="ml-[5px] mt-[2px]">
          <svg width="22" height="20" viewBox="0 0 22 20">
            <path d="M0.700 4v12c0 4 20.600 4 20.600 0V4" fill="#f1f1f1" stroke="#8d8f92" />
            <path d="M14 7v12c4-.5 7-1.500 7-3V4c0 1.500-3 2.500-7 3z" fill="#d9d9d9" />
            <ellipse cx="11" cy="4" rx="10.3" ry="3.3" fill="#fbfbfb" stroke="#8d8f92" />
          </svg>
        </button>
        <button aria-label="List by selection" className="ml-[11px] mt-[2px]">
          <svg width="20" height="20" viewBox="0 0 20 20">
            <rect x="0.7" y="0.7" width="18.6" height="18.6" fill="#fff" stroke="#6b6d70" strokeWidth="1.3" />
            <path d="M1.300 1.300h4c0 6 7 8 8 17.400h-12z" fill="#d0e9f8" />
            <path d="M5 1c0 6 8 8 9 18M11 10c1-3 4-4 8-5" fill="none" stroke="#6b6d70" />
          </svg>
        </button>
        <button aria-label="List by editing" className="ml-3 mt-[2px]">
          <svg width="20" height="20" viewBox="0 0 20 20">
            <path d="M0.500 19.500L3 15 15.500 2l2.500 2.500L5 17z" fill="#e0cc4c" stroke="#b9a22f" strokeWidth="0.5" />
            <path d="M15.500 2l1.500-1.500c1-.5 3 1.500 2.500 2.500L18 4.500z" fill="#d99a9a" />
          </svg>
        </button>
      </div>
      <button aria-label="List by snapping" className="-ml-[9px] mt-px">
        <svg width="9" height="17" viewBox="0 0 9 17" fill="#fff" stroke="#8d8f92">
          <path d="M0.500 0.500h8v16h-8zM0.500 8.500h8" />
        </svg>
      </button>
      <button aria-label="More lists" className="ml-3 mt-[14px]">
        <svg width="15" height="3" viewBox="0 0 15 3" fill="#333">
          <path d="M0 0h3v3H0zM6 0h3v3H6zM12 0h3v3h-3z" />
        </svg>
      </button>
    </div>
    <h3 className="mt-[9px] h-[26px] pl-[15px] pt-[2px] text-[13px] font-semibold leading-5">Drawing Order</h3>
    <div className="flex h-6 items-center pl-[3px]">
      <Expander open />
      <span className="ml-1 mr-[5px]">
        <MapGlyph />
      </span>
      Map
    </div>
    <LayerRow name="ElevationPoints" checked open />
    <div className="flex h-[22px] items-center pl-[29px]">
      <svg width="7" height="7" viewBox="0 0 7 7">
        <circle cx="3.5" cy="3.5" r="2.6" fill="#8a7a1c" stroke="#33270d" strokeWidth="1.2" />
      </svg>
    </div>
    <LayerRow name="StudyArea_Ramallah" checked open />
    <div className="flex h-[25px] items-center pl-[29px]">
      <svg width="20" height="16" viewBox="0 0 20 16" fill="none" stroke="#000" strokeWidth="1.5">
        <path d="M0.800 4V0.800H5M15 0.800h4.200V4M19.200 12v3.200H15M5 15.200H0.800V12" />
      </svg>
    </div>
    <LayerRow name="Idw_Elevatio3" checked open selected />
    <div className="h-[22px] pl-7 font-medium leading-[22px]">VALUE</div>
    <ul className="mb-[3px]">
      {idwClasses.map((c) => (
        <li key={c.label} className="flex h-5 items-center pl-[31px]">
          <span className="mr-2 h-[13px] w-4" style={{ backgroundColor: c.color }} />
          {c.label}
        </li>
      ))}
    </ul>
    <LayerRow name="Idw_Elevatio2" />
    <LayerRow name="Idw_Elevatio1" />
    <LayerRow name="m4" />
    <LayerRow name="m3" />
    <LayerRow name="mm2" open />
    <div className="h-[22px] pl-7 font-medium leading-[22px]">Elevation</div>
    <ul>
      {elevationClasses.map((c) => (
        <li key={c.label} className="flex h-5 items-center pl-[29px]">
          <span className="mr-[6px] h-[15px] w-5" style={{ backgroundColor: c.color }} />
          {c.label}
        </li>
      ))}
    </ul>
  </aside>
);

/* ---------- map view ---------- */

const StatusBar = () => (
  <div className="flex h-6 shrink-0 items-center bg-[#f8f8f8] pl-[5px] text-[11px] text-[#444]">
    <div className="relative">
      <select
        aria-label="Map scale"
        className="block h-[22px] w-[100px] appearance-none border border-[#ababab] bg-white pl-[5px] outline-none"
      >
        <option>1:60,129</option>
      </select>
      <span className="pointer-events-none absolute right-1 top-[9px]">
        <Caret />
      </span>
    </div>
    <span className="ml-1 h-4 w-px bg-[#999]" />
    <button aria-label="Snapping" className="ml-[5px] flex h-5 w-5 items-center justify-center bg-[#a3d3f2]">
      <svg width="16" height="16" viewBox="0 0 16 16" fill="none" stroke="#6b6d70">
        <path d="M0.500 1.500h10v9h-10zM5.500 1.500v9M0.500 6h10" stroke="#6f93ad" />
        <path d="M12 9v6M9 12h6" stroke="#555" strokeWidth="1.2" />
      </svg>
    </button>
    <button aria-label="Inference" className="ml-1">
      <svg width="17" height="15" viewBox="0 0 17 15" fill="none" stroke="#555">
        <path d="M2.500 14L8 5h5v9z" fill="#d0e9f8" stroke="none" />
        <path d="M0.500 2h4v3h-4zM11.500 8h4v3h-4zM13 0v4M11 2h4" />
        <path d="M3 12l8-9" stroke="#4a9dd8" strokeDasharray="2 1.5" />
        <path d="M1 13.500h15" stroke="#4a9dd8" strokeWidth="1.5" />
        <path d="M0 12.500h3v2H0z" fill="#2f8a4c" stroke="none" />
      </svg>
    </button>
    <button aria-label="Grid" className="ml-[6px]">
      <svg width="13" height="13" viewBox="0 0 13 13" fill="none" stroke="#8d8f92">
        <path d="M0.500 0.500h12v12h-12zM3.500 0v13M6.500 0v13M9.500 0v13M0 3.500h13M0 6.500h13M0 9.500h13" />
      </svg>
    </button>
    <button aria-label="Dynamic constraints" className="ml-2">
      <svg width="17" height="16" viewBox="0 0 17 16" fill="none">
        <path d="M1 11V5l5 6V5" stroke="#3f97d3" strokeWidth="1.8" />
        <path d="M8.500 0.500v15M9 15l7-8" stroke="#6b6d70" strokeWidth="1.2" />
        <path d="M10 1c3 0 4 2 3.500 5M11 4.500l2.500 2 2.500-2" stroke="#3f97d3" strokeWidth="1.3" />
      </svg>
    </button>
    <span className="ml-[6px] h-4 w-px bg-[#999]" />
    <div className="ml-auto mr-[110px] flex items-center gap-[10px]">
      <span>179,358.60E 141,781.43N m</span>
      <button aria-label="Coordinate units">
        <Chevron />
      </button>
    </div>
  </div>
);

const MapView = () => (
  <section className="flex min-w-0 flex-1 flex-col border-b border-l border-[#c9c9c9]">
    <div className="flex h-[23px] shrink-0 items-start border-b-2 border-[#c9c9c9] pl-px">
      <div className="flex h-[21px] w-[73px] items-center bg-[#d2d2d2] pl-1 text-xs text-[#6b6b6b]">
        <MapGlyph />
        <span className="ml-[5px] mr-2 w-6">Map</span>
        <button aria-label="Close Map view">
          <CloseGlyph color="#777" />
        </button>
      </div>
    </div>
    <div className="relative flex-1 overflow-hidden bg-white">
      <MapCanvas />
    </div>
    <StatusBar />
  </section>
);

/* ---------- geoprocessing pane ---------- */

const SectionHeader = ({ title, className = '' }: { title?: string; className?: string }) => (
  <button
    aria-label={title ? undefined : 'Collapse section'}
    className={`-ml-3 flex h-6 items-center gap-1 text-[13px] font-medium ${className}`}
  >
    <Chevron />
    {title}
  </button>
);

interface SelectFieldProps {
  id: string;
  options: string[];
  className?: string;
  pad?: string;
}

const SelectField: React.FC<SelectFieldProps> = ({ id, options, className = '', pad = 'pl-1' }) => (
  <div className={`relative ${className}`}>
    <select
      id={id}
      className={`block h-[22px] w-full appearance-none border border-[#ababab] bg-white outline-none ${pad}`}
    >
      {options.map((o) => (
        <option key={o}>{o}</option>
      ))}
    </select>
    <span className="pointer-events-none absolute right-[3px] top-[9px]">
      <Caret className="text-black" />
    </span>
  </div>
);

const FieldLabel = ({ htmlFor, children, className = '' }: { htmlFor: string; children: React.ReactNode; className?: string }) => (
  <label htmlFor={htmlFor} className={`block h-4 leading-[18px] ${className}`}>
    {children}
  </label>
);

const inputStyle = 'block h-[22px] min-w-0 border border-[#ababab] bg-white outline-none';

const arrowPaths: Record<string, string> = {
  left: 'M0 5l4.500-4v3H10v2H4.500v3z',
  right: 'M10 5L5.500 1v3H0v2h5.500v3z',
  down: 'M5 10L1 5.500h3V0h2v5.500h3z',
  up: 'M5 0L1 4.500h3V10h2V4.500h3z',
};

const ExtentField = ({ side, value, className }: { side: string; value: string; className: string }) => (
  <div className={`flex items-center ${className}`}>
    <svg className="shrink-0" width="10" height="10" viewBox="0 0 10 10" fill="#444" aria-hidden="true">
      <path d={arrowPaths[side]} />
    </svg>
    <input aria-label={`Extent ${side}`} defaultValue={value} className={`${inputStyle} ml-[2px] flex-1 pl-1`} />
  </div>
);

const FolderButton = ({ label }: { label: string }) => (
  <button aria-label={label} className="ml-[6px]">
    <Folder />
  </button>
);

const EnvironmentForm = () => {
  const [mask, setMask] = useState('StudyArea_Ramallah');
  const choices = ['ElevationPoints', 'StudyArea_Ramallah', 'Idw_Elevatio2', 'Idw_Elevatio1'];

  return (
    <div className="h-full min-w-0 flex-1 overflow-hidden pl-[17px] pr-[10px] pt-[2px]">
      <SectionHeader title="Output Coordinates" />
      <FieldLabel htmlFor="ocs" className="mt-[2px]">Output Coordinate System</FieldLabel>
      <div className="flex items-center">
        <SelectField id="ocs" options={['']} className="w-[312px]" />
        <button aria-label="Select coordinate system" className="ml-[6px]">
          <svg width="17" height="17" viewBox="0 0 17 17" fill="none" stroke="#66686c" strokeWidth="1.1">
            <circle cx="8.5" cy="8.5" r="7.7" fill="#e4e4e4" strokeWidth="1.4" />
            <ellipse cx="8.5" cy="8.5" rx="3.7" ry="7.7" />
            <path d="M1 8.500h15M8.500 1v15M2.500 4.500h12M2.500 12.500h12" />
          </svg>
        </button>
      </div>
      <FieldLabel htmlFor="transform" className="mt-1">Geographic Transformations</FieldLabel>
      <SelectField id="transform" options={['']} className="ml-5" />

      <SectionHeader title="Processing Extent" className="mt-[6px]" />
      <div className="mt-[3px] flex items-center justify-between">
        <label htmlFor="extent">Extent</label>
        <SelectField id="extent" options={['As Specified Below']} className="w-[151px]" pad="pl-px" />
      </div>
      <div className="mt-1 flex gap-1 pl-[2px]">
        <ExtentField side="left" value="165129.121" className="w-[185px] shrink-0" />
        <ExtentField side="right" value="172415.2495" className="min-w-0 flex-1" />
      </div>
      <div className="mt-[2px] flex gap-1 pl-[2px]">
        <ExtentField side="down" value="141271.798599999" className="w-[185px] shrink-0" />
        <ExtentField side="up" value="148945.166099999" className="min-w-0 flex-1" />
      </div>

      <SectionHeader title="Raster Analysis" className="mt-[5px]" />
      <FieldLabel htmlFor="cell-size" className="mt-[2px]">Cell Size</FieldLabel>
      <div className="flex items-center">
        <SelectField id="cell-size" options={['Maximum of Inputs']} className="w-[312px]" />
        <FolderButton label="Browse cell size" />
      </div>
      <FieldLabel htmlFor="projection" className="mt-[3px]">Cell Size Projection Method</FieldLabel>
      <SelectField id="projection" options={['Convert units']} pad="pl-px" />
      <div className="relative mt-[3px]">
        <span className="absolute -left-4 -top-[2px] h-10 w-4 bg-linear-to-r from-[#c5dff2] to-[#f8f8f8]" />
        <svg className="absolute -left-4 top-1" width="13" height="13" viewBox="0 0 13 13" aria-hidden="true">
          <circle cx="6.5" cy="6.5" r="6.5" fill="#62b0e3" />
          <path d="M6.500 5.500v5M6.500 2.500v1.700M5 10.300h3M5.300 5.700h1.200" stroke="#fff" strokeWidth="1.3" />
        </svg>
        <FieldLabel htmlFor="mask">Mask</FieldLabel>
        <div className="flex items-center">
          <div className="relative flex w-[312px]">
            <input
              id="mask"
              role="combobox"
              aria-expanded="true"
              aria-controls="mask-options"
              value={mask}
              onChange={(e) => setMask(e.target.value)}
              className={`${inputStyle} flex-1 border-r-0 pl-1`}
            />
            <span className="pointer-events-none absolute left-[112px] top-1 h-[14px] w-px bg-black" />
            <button aria-label="Show mask layers" className="flex h-[22px] w-[13px] items-center justify-center border border-[#7fb2d8] bg-[#9fc4e0]">
              <Caret className="text-black" />
            </button>
            <ul
              id="mask-options"
              role="listbox"
              className="absolute left-0 top-[22px] z-10 w-[312px] border border-[#ababab] bg-white shadow-[2px_2px_2px_#8f8f8f]"
            >
              {choices.map((c) => (
                <li
                  key={c}
                  role="option"
                  aria-selected={c === mask}
                  onClick={() => setMask(c)}
                  className={`h-[21px] border pl-[10px] leading-[19px] ${
                    c === 'StudyArea_Ramallah' ? 'border-[#d5d5d5] bg-[#f3f3f3]' : 'border-transparent'
                  }`}
                >
                  {c}
                </li>
              ))}
            </ul>
          </div>
          <FolderButton label="Browse mask" />
        </div>
      </div>
      <div className="mt-[19px] flex h-[22px] items-center pl-[312px]">
        <FolderButton label="Browse snap raster" />
      </div>

      <SectionHeader className="mt-1" />
      <FieldLabel htmlFor="config" className="mt-[3px]">Output CONFIG Keyword</FieldLabel>
      <input id="config" className={`${inputStyle} w-full pl-1`} />
      <div className="mt-1 flex items-center justify-between">
        <label htmlFor="commit">Auto Commit</label>
        <input id="commit" defaultValue="1000" className={`${inputStyle} w-[151px] pr-[2px] text-right`} />
      </div>

      <SectionHeader title="Raster Storage" className="mt-[5px]" />
      <div className="mt-[3px] flex items-center">
        <span className="flex-1">Tile Size</span>
        <label htmlFor="tile-width" className="mr-1 text-[#8a8a8a]">Width</label>
        <input id="tile-width" defaultValue="128" className={`${inputStyle} w-[151px] pr-[2px] text-right`} />
      </div>
      <div className="mt-[2px] flex items-center justify-end">
        <label htmlFor="tile-height" className="mr-1 text-[#8a8a8a]">Height</label>
        <input id="tile-height" defaultValue="128" className={`${inputStyle} w-[151px] pr-[2px] text-right`} />
      </div>
    </div>
  );
};

const Geoprocessing = () => (
  <section className="absolute right-[84px] top-[162px] z-20 flex h-[760px] w-[378px] flex-col border border-[#0079c1] bg-[#f8f8f8] text-[11px] text-[#4c4c4c]">
    <div className="m-px mb-0 h-1 shrink-0 bg-[#0079cf]" />
    <div className="flex h-[22px] shrink-0 items-center justify-between pl-[6px] pr-[6px]">
      <h2 className="text-[15px] text-[#0076c6]">Geoprocessing</h2>
      <div className="flex items-center gap-2 pb-1">
        <button aria-label="Pane menu">
          <PaneCaret />
        </button>
        <button aria-label="Maximize">
          <svg width="9" height="9" viewBox="0 0 9 9" fill="none" stroke="#555">
            <path d="M0.500 0.500h8v8h-8z" />
            <path d="M0 1h9" strokeWidth="2" />
          </svg>
        </button>
        <button aria-label="Close pane">
          <CloseGlyph />
        </button>
      </div>
    </div>
    <div className="mt-3 flex h-[22px] shrink-0 items-center justify-between pl-2 pr-[3px]">
      <button aria-label="Back">
        <svg width="18" height="18" viewBox="0 0 18 18" fill="none" stroke="#66686c">
          <circle cx="9" cy="9" r="8.3" strokeWidth="1.1" />
          <path d="M14 9H5M9 4.500L4.500 9 9 13.500" strokeWidth="1.7" />
        </svg>
      </button>
      <h3 className="text-[15px]">IDW</h3>
      <button aria-label="Add to model">
        <svg width="18" height="18" viewBox="0 0 18 18" fill="none" stroke="#66686c">
          <circle cx="9" cy="9" r="8.3" strokeWidth="1.1" />
          <path d="M9 3.500v11M3.500 9h11" strokeWidth="1.8" />
        </svg>
      </button>
    </div>
    <div className="mt-3 flex h-6 shrink-0 items-start gap-[10px] pl-[10px] pr-[7px] leading-4">
      <button className="h-6 pt-1 text-xs leading-4">Parameters</button>
      <button className="h-6 border-b-2 border-[#0079c1] pt-1 text-[13px] font-medium leading-4 text-[#3f3f3f]">
        Environments
      </button>
      <button aria-label="Help" className="ml-auto mt-[6px]">
        <svg width="16" height="16" viewBox="0 0 16 16" fill="none" stroke="#4a9dd8">
          <circle cx="8" cy="8" r="7.4" fill="#dff0fa" />
          <path d="M5.500 6c0-3.500 5-3.500 5 0 0 1.800-2.500 1.800-2.500 4M8 11.500v1.500" strokeWidth="1.5" />
        </svg>
      </button>
    </div>
    <div className="mt-[11px] flex min-h-0 flex-1">
      <EnvironmentForm />
      <div className="mr-[3px] flex w-2 shrink-0 flex-col items-center">
        <svg width="8" height="6" viewBox="0 0 8 6" fill="#8a8a8a">
          <path d="M0 6h8L4 0z" />
        </svg>
        <div className="mt-1 min-h-0 w-full flex-1 bg-[#7bbde8]" />
        <div className="h-3 w-full bg-[#dcdcdc]" />
        <svg className="mt-[3px]" width="8" height="6" viewBox="0 0 8 6" fill="#8a8a8a">
          <path d="M0 0h8L4 6z" />
        </svg>
      </div>
    </div>
    <div className="mr-[6px] mt-[6px] flex h-[25px] shrink-0 self-end border border-[#333] bg-white text-xs">
      <button className="flex w-[69px] items-center justify-center gap-[6px] pl-1">
        Run
        <svg width="16" height="16" viewBox="0 0 16 16">
          <circle cx="8" cy="8" r="7.4" fill="#cfe8f7" stroke="#4a9dd8" />
          <path d="M6 4.200l5.500 3.800L6 11.800z" fill="#4a9dd8" />
        </svg>
      </button>
      <button aria-label="Run options" className="flex w-4 items-center justify-center border-l border-[#333]">
        <Caret className="text-[#333]" />
      </button>
    </div>
    <div className="mb-[3px] ml-[5px] mr-1 mt-[6px] flex h-11 shrink-0 items-center bg-[#e3efe2] pl-3 pr-[7px]">
      <svg width="13" height="13" viewBox="0 0 13 13" aria-hidden="true">
        <circle cx="6.5" cy="6.5" r="6.5" fill="#4d9d51" />
        <path d="M3.300 6.700l2.200 2.300 4.200-4.500" fill="none" stroke="#fff" strokeWidth="1.8" />
      </svg>
      <div className="ml-[17px] flex-1 leading-[19px]">
        <p>IDW completed.</p>
        <p className="flex gap-2 text-[#4f8f53]">
          <a href="#details">View Details</a>
          <a href="#history">Open History</a>
        </p>
      </div>
      <button aria-label="Dismiss message">
        <CloseGlyph color="#8a8a8a" />
      </button>
    </div>
  </section>
);

export default function App() {
  return (
    <div className="relative flex h-screen flex-col overflow-hidden bg-[#f0f0f0] font-['Open_Sans','Noto_Sans',sans-serif]">
      <TopBar />
      <Ribbon />
      <div className="flex min-h-0 flex-1 gap-[6px] pb-[6px] pl-[6px] pt-[5px]">
        <Contents />
        <MapView />
      </div>
      <div className="flex h-[2px] shrink-0 justify-center bg-[#4a4a4a] pl-[285px]">
        <div className="w-40 bg-[#7a7a7a]" />
      </div>
      <Geoprocessing />
      <Ink />
    </div>
  );
}
